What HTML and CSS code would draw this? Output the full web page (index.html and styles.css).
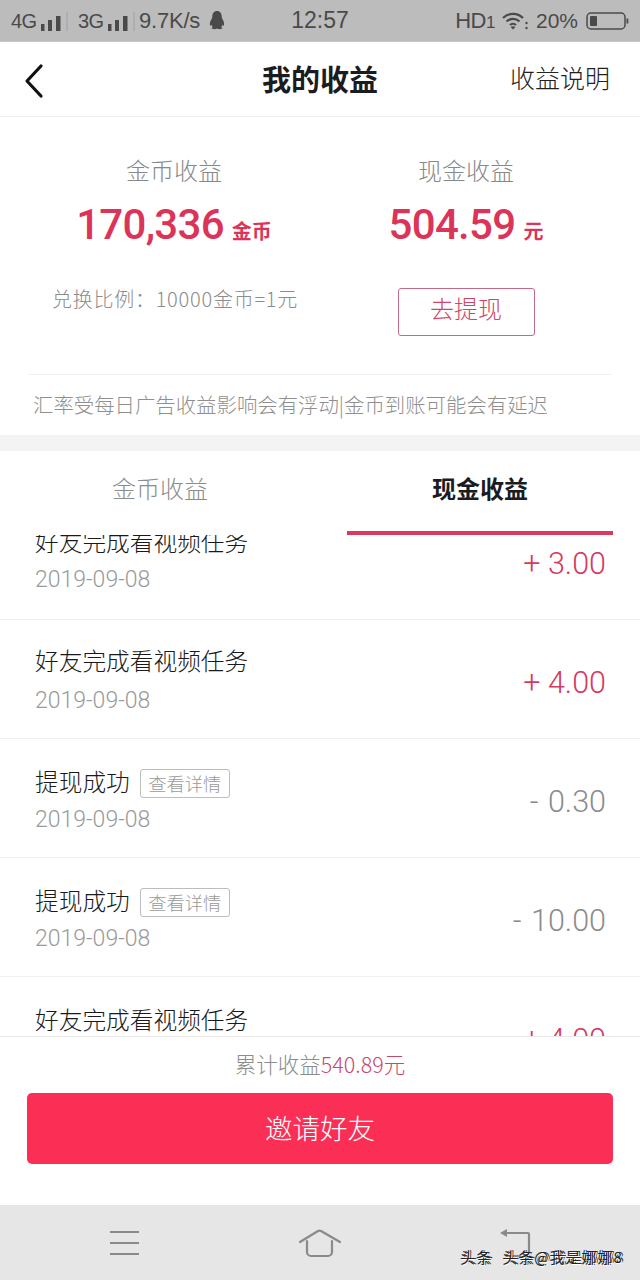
FILE: index.html
```html
<!DOCTYPE html>
<html lang="zh-CN">
<head>
<meta charset="utf-8">
<title>我的收益</title>
<link rel="stylesheet" href="styles.css">
</head>
<body>
<div class="app">
  <header class="status">
    <div class="status-left">
      <span class="net">4G</span>
      <svg class="bars" width="27" height="20" viewBox="0 0 27 20"><rect x="0" y="13" width="3.500" height="7"/><rect x="7" y="9" width="4" height="11"/><rect x="15" y="5" width="4.500" height="15"/><rect x="25" y="1" width="2" height="19" opacity=".12"/></svg>
      <span class="net">3G</span>
      <svg class="bars" width="27" height="20" viewBox="0 0 27 20"><rect x="0" y="13" width="3.500" height="7"/><rect x="7" y="9" width="4" height="11"/><rect x="15" y="5" width="4.500" height="15"/><rect x="25" y="1" width="2" height="19" opacity=".12"/></svg>
      <span class="speed">9.7K/s</span>
      <svg class="qq" width="16" height="20" viewBox="0 0 15 19"><path d="M7.500 0C10.500 0 12 2.400 12 5.400c0 1 .3 1.700 .9 2.700 .9 1.500 1.600 3.300 1.300 5.300-.2 1-.8 .8-1.500-.3-.2 1.100-.7 1.800-1.300 2.300 .9 .3 1.400 .7 1.300 1.100-.1 .5-2.500 1.200-3.700 .7-.5-.2-1-.3-1.500-.3s-1 .1-1.500 .3c-1.200 .5-3.600 -.2-3.700-.7-.1-.4 .4-.8 1.300-1.100-.6-.5-1.100-1.200-1.300-2.300-.7 1.100-1.300 1.300-1.500 .3-.3-2 .4-3.800 1.300-5.300 .6-1 .9-1.700 .9-2.700C3 2.400 4.500 0 7.500 0z"/></svg>
    </div>
    <div class="clock">12:57</div>
    <div class="status-right">
      <span class="hd">HD<small>1</small></span>
      <svg class="wifi" width="26" height="18" viewBox="0 0 26 18" fill="none" stroke="#4a4a4a" stroke-width="2.200"><path d="M1 6C6.500 .5 15.500 .5 21 6"/><path d="M4.500 9.500c3.500-3.500 9.500-3.500 13 0"/><path d="M8 13c1.700-1.700 4.300-1.700 6 0"/><path d="M11 17.500l-2.400-2.600c1.300-1 3.500-1 4.800 0z" fill="#4a4a4a" stroke="none"/><circle cx="24.500" cy="11" r="1.200" fill="#4a4a4a" stroke="none"/><circle cx="24.500" cy="16" r="1.200" fill="#4a4a4a" stroke="none"/></svg>
      <span class="pct">20%</span>
      <svg class="battery" width="43" height="18" viewBox="0 0 43 18"><rect x="1" y="1" width="38" height="16" rx="4" fill="none" stroke="#4a4a4a" stroke-width="1.500"/><rect x="4" y="4" width="7" height="10" rx="1" fill="#4a4a4a"/><rect x="40.500" y="6.500" width="1.800" height="5" fill="#4a4a4a"/></svg>
    </div>
  </header>

  <nav class="topbar">
    <svg class="back" width="24" height="36" viewBox="0 0 24 36" fill="none" stroke="#111" stroke-width="3.200" stroke-linecap="round" stroke-linejoin="round"><path d="M19 3L5 18l14 15"/></svg>
    <h1 class="title">我的收益</h1>
    <span class="explain">收益说明</span>
  </nav>

  <section class="summary">
    <div class="sum-grid">
      <div class="sum-col">
        <div class="sum-label">金币收益</div>
        <div class="sum-value"><span class="num">170,336</span><span class="unit">金币</span></div>
        <div class="ratio">兑换比例：10000金币=1元</div>
      </div>
      <div class="sum-col">
        <div class="sum-label">现金收益</div>
        <div class="sum-value"><span class="num">504.59</span><span class="unit">元</span></div>
        <div class="withdraw">去提现</div>
      </div>
    </div>
    <p class="notice">汇率受每日广告收益影响会有浮动|金币到账可能会有延迟</p>
  </section>

  <div class="tabs">
    <div class="tab">金币收益</div>
    <div class="tab active">现金收益</div>
  </div>

  <main class="list">
    <div class="row first">
      <div class="info"><div class="name">好友完成看视频任务</div><div class="date">2019-09-08</div></div>
      <div class="amount plus">+ 3.00</div>
    </div>
    <div class="row">
      <div class="info"><div class="name">好友完成看视频任务</div><div class="date">2019-09-08</div></div>
      <div class="amount plus">+ 4.00</div>
    </div>
    <div class="row">
      <div class="info"><div class="name">提现成功<span class="detail">查看详情</span></div><div class="date">2019-09-08</div></div>
      <div class="amount">- 0.30</div>
    </div>
    <div class="row">
      <div class="info"><div class="name">提现成功<span class="detail">查看详情</span></div><div class="date">2019-09-08</div></div>
      <div class="amount">- 10.00</div>
    </div>
    <div class="row">
      <div class="info"><div class="name">好友完成看视频任务</div><div class="date">2019-09-08</div></div>
      <div class="amount plus">+ 4.00</div>
    </div>
  </main>

  <footer class="foot">
    <div class="total">累计收益<span class="total-num">540.89元</span></div>
    <div class="invite">邀请好友</div>
  </footer>

  <div class="sysnav">
    <svg width="32" height="26" viewBox="0 0 32 26" fill="none" stroke="#8a8a8a" stroke-width="2.200"><path d="M1 2h29M1 13h29M1 24h29"/></svg>
    <svg width="44" height="30" viewBox="0 0 44 30" fill="none" stroke="#8a8a8a" stroke-width="2.200" stroke-linecap="round" stroke-linejoin="round"><path d="M2 14L20 3a4 4 0 0 1 3 0l19 11"/><path d="M9 13v11a4 4 0 0 0 4 4h17a4 4 0 0 0 4-4V13"/></svg>
    <svg width="32" height="30" viewBox="0 0 32 30" fill="none" stroke="#8a8a8a" stroke-width="2.200" stroke-linejoin="round"><path d="M6 5h23a1 1 0 0 1 1 1v22H6"/><path d="M1 5l7-4v8z" fill="#8a8a8a" stroke="none"/></svg>
    <div class="watermark">头条 头条@我是娜娜8</div>
  </div>
</div>
</body>
</html>
```
FILE: styles.css
```css
* { box-sizing: border-box; }
html, body { margin: 0; padding: 0; }
body {
  background: #fff;
  font-family: "Noto Sans CJK SC", "Liberation Sans", sans-serif;
  color: #1a1a1a;
}
.app { width: 640px; height: 1280px; display: flex; flex-direction: column; overflow: hidden; }

.status {
  height: 42px; flex: none; background: #bcbcbc; color: #4a4a4a;
  display: grid; grid-template-columns: 1fr auto 1fr; align-items: center;
  padding: 0 11px;
  font-family: "Liberation Sans", sans-serif;
  border-bottom: 1px solid #c8c8c8;
}
.status-left { display: flex; align-items: center; }
.status-left svg rect { fill: #4a4a4a; }
.net { font-size: 20px; width: 25px; line-height: 24px; letter-spacing: -.6px; }
.bars { margin: 0 10px 0 5px; }
.speed { font-size: 22px; margin-left: -6px; letter-spacing: -.2px; }
.qq { margin-left: 9px; fill: #4a4a4a; }
.clock { font-size: 23px; }
.status-right { display: flex; align-items: center; justify-content: flex-end; }
.hd { font-size: 22px; letter-spacing: -.5px; }
.hd small { font-size: 17px; }
.wifi { margin-left: 7px; }
.pct { font-size: 21px; margin-left: 8px; }
.battery { margin-left: 8px; }

.topbar {
  height: 75px; flex: none; border-bottom: 1px solid #eeeeee;
  display: grid; grid-template-columns: 1fr auto 1fr; align-items: center;
  padding: 0 30px;
}
.back { margin: 3px 0 0 -8px; }
.title { margin: 0 0 2px; font-size: 29px; font-weight: 700; color: #1b1b22; line-height: 1; }
.explain { justify-self: end; font-size: 25px; font-weight: 300; color: #222; padding-bottom: 5px; }

.summary { height: 318px; flex: none; padding: 0 28px; display: flex; flex-direction: column; }
.sum-grid { height: 258px; flex: none; display: grid; grid-template-columns: 292px 292px; border-bottom: 1px solid #f1f1f1; }
.sum-col { display: flex; flex-direction: column; align-items: center; padding-top: 36px; }
.sum-label { font-size: 24px; font-weight: 300; color: #888; line-height: 34px; }
.sum-value { display: flex; align-items: baseline; gap: 8px; color: #dc3358; margin-top: 13px; line-height: 50px; height: 50px; }
.num { font-family: "Roboto", sans-serif; font-size: 42px; font-weight: 500; letter-spacing: -.7px; }
.unit { font-size: 20px; font-weight: 700; }
.ratio { font-size: 20px; font-weight: 300; color: #8c8c8c; margin-top: 34px; line-height: 30px; margin-left: 2px; letter-spacing: .75px; white-space: nowrap; }
.withdraw {
  width: 137px; height: 48px; margin-top: 38px; border: 1px solid #c46a82; border-radius: 3px;
  color: #cf4669; font-size: 24px; font-weight: 300; display: flex; align-items: center; justify-content: center;
  padding-bottom: 10px;
}
.notice { margin: 0; padding: 13px 0 0 5px; font-size: 20.400px; font-weight: 300; color: #8f8f8f; line-height: 32px; white-space: nowrap; }

.tabs { border-top: 16px solid #f3f3f3; height: 100px; flex: none; display: grid; grid-template-columns: 266px 266px; column-gap: 54px; padding-left: 27px; }
.tab { display: flex; align-items: center; justify-content: center; font-size: 24px; font-weight: 300; color: #8c8c8c; padding-bottom: 12px; height: 84px; }
.tab.active { color: #1b1b22; font-weight: 700; border-bottom: 4px solid #d93a60; padding-bottom: 8px; }

.list { flex: 1; min-height: 0; overflow: hidden; }
.row { height: 119px; padding: 0 34px 0 35px; display: flex; align-items: center; justify-content: space-between; border-bottom: 1px solid #f0f0f0; }
.row.first { margin-top: -34px; }
.info { display: flex; flex-direction: column; gap: 6px; padding-top: 2px; }
.row.first .info { padding: 0 0 2px; }
.row.first + .row .info { gap: 8px; padding-top: 0; }
.name { font-size: 23.700px; font-weight: 300; color: #1a1a1a; line-height: 36px; display: flex; align-items: center; }
.date { font-family: "Roboto", sans-serif; font-weight: 300; font-size: 23px; color: #9a9a9a; line-height: 30px; }
.amount { font-family: "Roboto", sans-serif; font-weight: 300; font-size: 30.500px; color: #8c8c8c; padding-top: 7px; word-spacing: 2px; }
.amount.plus { color: #d6395f; word-spacing: 0; }
.detail { margin: 4px 0 0 10px; width: 90px; height: 29px; border: 1px solid #bdbdbd; border-radius: 3px; font-size: 18.300px; color: #9a9a9a; display: flex; align-items: center; justify-content: center; }

.foot { height: 169px; flex: none; border-top: 1px solid #e8e8e8; padding: 0 27px; display: flex; flex-direction: column; align-items: center; }
.total { font-size: 21.500px; font-weight: 300; color: #8c8c8c; line-height: 28px; margin-top: 13px; }
.total-num { color: #c9486e; }
.invite { align-self: stretch; height: 71px; margin-top: 15px; background: #fb2f56; border-radius: 5px; color: #fff; font-size: 27.500px; font-weight: 300; display: flex; align-items: center; justify-content: center; padding-bottom: 3px; }

.sysnav { height: 75px; flex: none; background: #e6e6e6; position: relative; display: grid; grid-template-columns: 250px 140px 250px; justify-items: center; align-items: center; }
.watermark { position: absolute; left: 460px; top: 41px; font-size: 15px; letter-spacing: 1px; word-spacing: 6px; color: #222; text-shadow: 1px 1px 0 #fff, 2px 0 0 #333; white-space: nowrap; }
```
